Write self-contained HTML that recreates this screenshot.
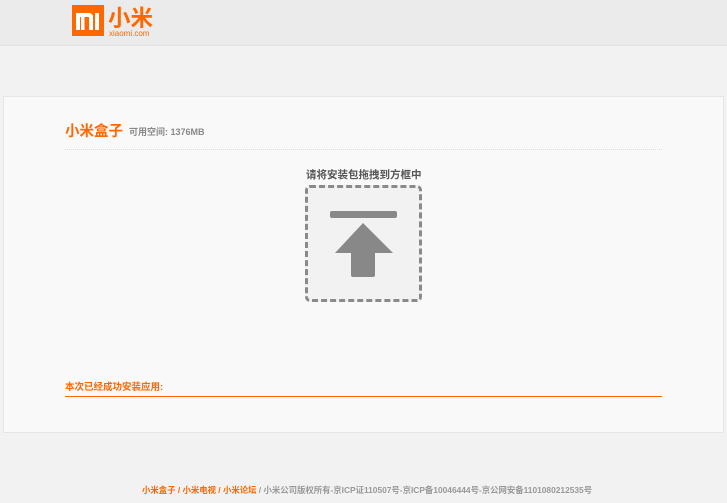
<!DOCTYPE html>
<html><head><meta charset="utf-8"><style>
*{margin:0;padding:0;box-sizing:border-box}
body{width:727px;height:503px;background:#f2f2f2;font-family:"Liberation Sans","Noto Sans CJK SC",sans-serif;position:relative;overflow:hidden}
.hdr{position:absolute;left:0;top:0;width:727px;height:46px;background:#ebebeb;border-bottom:1px solid #e2e2e2}
.logo{position:absolute;left:72px;top:5px;width:32px;height:31px;background:#ff6700}
.card{position:absolute;left:3px;top:96px;width:721px;height:337px;background:#f9f9f9;border:1px solid #e6e6e6}
.abs{position:absolute;white-space:nowrap}
</style></head><body>
<div class="hdr"></div>
<div class="logo"><svg width="32" height="31" viewBox="0 0 32 31"><path d="M4 25V8h13c2.5 0 4 1.5 4 4v13h-4V12h-4.5v13h-3.5V12H8v13z M23 8h4v17h-4z" fill="#fff"/></svg></div>
<div class="abs" style="left:108px;top:7px;font-size:22.5px;line-height:24px;color:#ff6700;font-weight:bold">小米</div>
<div class="abs" style="left:109px;top:29px;font-size:8px;color:#ff6700">xiaomi.com</div>
<div class="card"></div>
<div class="abs" style="left:65px;top:120px;font-size:14.5px;font-weight:bold;color:#ff6700">小米盒子</div>
<div class="abs" style="left:129px;top:125px;font-size:9px;font-weight:bold;color:#888">可用空间: 1376MB</div>
<div style="position:absolute;left:65px;top:149px;width:597px;border-top:1px dotted #ddd"></div>
<div class="abs" style="left:306px;top:167px;font-size:10.5px;font-weight:bold;color:#555">请将安装包拖拽到方框中</div>
<div style="position:absolute;left:305px;top:185px;width:117px;height:117px;border:3px dashed #8a8a8a;border-radius:5px;background:#f2f2f2"></div>
<svg style="position:absolute;left:300px;top:180px" width="130" height="130">
<rect x="30" y="31" width="67" height="7" rx="2" fill="#888"/>
<path d="M63 43 L93 73 L75 73 L75 95 Q75 97 73 97 L53 97 Q51 97 51 95 L51 73 L35 73 Z" fill="#888"/>
</svg>
<div class="abs" style="left:65px;top:379px;font-size:9.5px;font-weight:bold;color:#ff6700">本次已经成功安装应用:</div>
<div style="position:absolute;left:65px;top:396px;width:597px;height:1px;background:#ff6700"></div>
<div class="abs" style="left:142px;top:484px;font-size:8.4px;font-weight:bold;color:#999"><span style="color:#ff6700">小米盒子 / 小米电视 / 小米论坛</span> / 小米公司版权所有-京ICP证110507号-京ICP备10046444号-京公网安备1101080212535号</div>
</body></html>
